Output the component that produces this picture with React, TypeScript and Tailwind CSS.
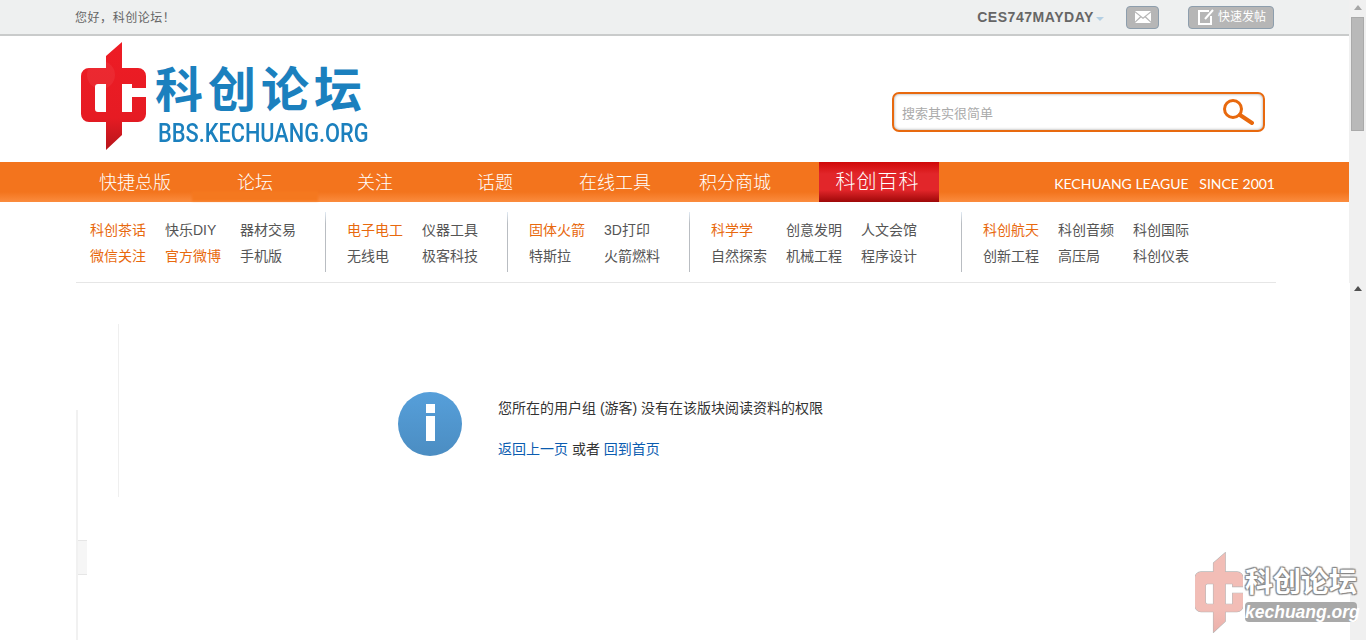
import React from 'react';

const cjk = "font-['Liberation_Sans','Noto_Sans_CJK_SC',sans-serif]";

const navItems = ['快捷总版', '论坛', '关注', '话题', '在线工具', '积分商城'];

const groups = [
  {
    pad: 'pl-[14px] pr-[10px]',
    rows: [
      [['科创茶话', true], ['快乐DIY', false], ['器材交易', false]],
      [['微信关注', true], ['官方微博', true], ['手机版', false]],
    ],
  },
  {
    pad: 'pl-[21px] pr-[10px]',
    rows: [
      [['电子电工', true], ['仪器工具', false]],
      [['无线电', false], ['极客科技', false]],
    ],
  },
  {
    pad: 'pl-[21px] pr-[10px]',
    rows: [
      [['固体火箭', true], ['3D打印', false]],
      [['特斯拉', false], ['火箭燃料', false]],
    ],
  },
  {
    pad: 'pl-[21px] pr-[25px]',
    rows: [
      [['科学学', true], ['创意发明', false], ['人文会馆', false]],
      [['自然探索', false], ['机械工程', false], ['程序设计', false]],
    ],
  },
  {
    pad: 'pl-[21px]',
    rows: [
      [['科创航天', true], ['科创音频', false], ['科创国际', false]],
      [['创新工程', false], ['高压局', false], ['科创仪表', false]],
    ],
  },
] as { pad: string; rows: [string, boolean][][] }[];

const LogoMark = ({ className, id, faded }: { className: string; id: string; faded?: boolean }) => (
  <svg viewBox="0 0 65 110" className={className}>
    <defs>
      <linearGradient id={id} gradientUnits="userSpaceOnUse" x1="0" y1="0" x2="0" y2="110">
        <stop offset="0" stopColor={faded ? '#f2bdb6' : '#ee1c25'} />
        <stop offset="0.7" stopColor={faded ? '#f2bdb6' : '#e61b23'} />
        <stop offset="1" stopColor={faded ? '#ecb0aa' : '#b5151b'} />
      </linearGradient>
    </defs>
    <g
      fill={`url(#${id})`}
      stroke={faded ? '#b5b5b5' : 'none'}
      strokeWidth={faded ? 1.5 : 0}
      paintOrder="stroke"
    >
      <path
        fillRule="evenodd"
        d="M8 27H25V15L41 1V27H57a8 8 0 0 1 8 8V47H51V43H41V71H51V56H65V73a8 8 0 0 1-8 8H41V94L25 109V81H8a8 8 0 0 1-8-8V35a8 8 0 0 1 8-8ZM17 43a3 3 0 0 0-3 3V68a3 3 0 0 0 3 3H25V43Z"
      />
    </g>
    {!faded && <circle cx="20" cy="34" r="14" fill="#fff" opacity="0.06" />}
  </svg>
);

export default function App() {
  return (
    <div className={`relative flex h-[640px] w-[1366px] overflow-hidden bg-white ${cjk}`}>
      <div className="w-[1349px] shrink-0">
        {/* top bar */}
        <div className="h-[36px] border-b-2 border-[#c9cbcb] bg-[#eef0f0]">
          <div className="ml-[75px] flex h-[34px] w-[1200px] items-center">
            <span className="pt-[1px] text-[12px] tracking-[0.55px] text-[#666]">您好，科创论坛！</span>
            <span className="ml-auto pt-[1px] font-['Liberation_Sans',sans-serif] text-[14px] font-bold tracking-[0.55px] text-[#666]">
              CES747MAYDAY
            </span>
            <span className="ml-[2px] mt-[3px] h-0 w-0 border-x-[4px] border-t-[4px] border-x-transparent border-t-[#b3cfe3]" />
            <div className="ml-[22px] flex h-[23px] w-[33px] items-center justify-center rounded-[4px] border border-[#8d9ead] bg-[#b6b6b6]">
              <svg viewBox="0 0 16 12" className="h-[12px] w-[16px]">
                <path d="M0 0H16L8 6.5Z M0 1.5V10.5L5 5.5Z M16 1.5V10.5L11 5.5Z M0 12H16L10 6.5 8 8 6 6.5Z" fill="#fff" />
              </svg>
            </div>
            <div className="ml-[29px] mr-px flex h-[23px] w-[86px] items-center rounded-[4px] border border-[#8d9ead] bg-[#b6b6b6] pl-[9px]">
              <svg viewBox="0 0 16 16" className="h-[16px] w-[16px]" fill="none" stroke="#fff" strokeWidth="2">
                <path d="M11 2H1V15H13V7" />
                <path d="M15 1 7 10" />
              </svg>
              <span className="ml-[4px] text-[12px] text-white">快速发帖</span>
            </div>
          </div>
        </div>

        {/* logo and search */}
        <div className="ml-[75px] flex h-[126px] w-[1200px]">
          <div className="ml-[6px] mt-[5px] flex">
            <LogoMark id="logo-red" className="h-[110px] w-[65px]" />
            <div className="ml-[9px] mt-[19px]">
              <div className="whitespace-nowrap text-[48px] font-bold leading-[52px] tracking-[5px] text-[#1b80be] [font-family:'Noto_Sans_CJK_SC',sans-serif]">
                科创论坛
              </div>
              <div className="ml-[3px] mt-[9px] origin-left scale-x-[0.87] whitespace-nowrap font-['Roboto',sans-serif] text-[25px] font-medium leading-[26px] text-[#1b80be]">
                BBS.KECHUANG.ORG
              </div>
            </div>
          </div>
          <div className="ml-auto mr-[10px] mt-[56px] flex h-[40px] w-[373px] items-center justify-between rounded-[7px] border-2 border-[#e8690e] pl-[8px] pr-[9px] shadow-[inset_0_0_3px_#999]">
            <span className="pt-[3px] text-[13px] text-[#aaa]">搜索其实很简单</span>
            <svg viewBox="0 0 32 26" className="h-[26px] w-[32px]" fill="none" stroke="#e8690e">
              <circle cx="11" cy="10" r="8.5" strokeWidth="3" />
              <path d="M18 16 30 24" strokeWidth="4" strokeLinecap="round" />
            </svg>
          </div>
        </div>

        {/* main nav */}
        <div className="relative h-[40px] bg-[linear-gradient(#f3741d_0%,#f3741d_75%,#fb8c3e_100%)]">
          <div className="absolute left-[192px] top-[29px] h-[10px] w-[126px] bg-[#f4781f] blur-[1px]" />
          <div className="relative ml-[75px] flex h-[40px] w-[1200px] items-center text-white">
            {navItems.map((item) => (
              <a key={item} className="w-[120px] pt-[3px] text-center text-[18px] font-light">
                {item}
              </a>
            ))}
            <a className="ml-[24px] h-[40px] w-[120px] bg-[linear-gradient(#d00808,#e2262a_30%,#e2262a_70%,#9e0808)] pr-[3px] text-center text-[20px] font-light leading-[40px] tracking-[1px]">
              科创百科
            </a>
            <span className="ml-auto whitespace-pre pt-[2px] font-['Lato',sans-serif] text-[14px]">
              KECHUANG LEAGUE   SINCE 2001
            </span>
          </div>
        </div>

        {/* sub nav */}
        <div className="ml-[76px] flex h-[81px] w-[1200px] border-b border-[#e6e6e6] pt-[10px]">
          {groups.map((group, i) => (
            <div
              key={i}
              className={`flex h-[60px] flex-col justify-center pt-[3px] ${group.pad} ${
                i > 0 ? 'border-l [border-image:linear-gradient(#e4eef8,#b9bdc2_20%)_1]' : ''
              }`}
            >
              {group.rows.map((row, j) => (
                <div key={j} className="flex h-[26px] items-center">
                  {row.map(([label, hot]) => (
                    <a
                      key={label}
                      className={`w-[75px] whitespace-nowrap text-[14px] ${hot ? 'text-[#e8690e]' : 'text-[#555]'}`}
                    >
                      {label}
                    </a>
                  ))}
                </div>
              ))}
            </div>
          ))}
        </div>

        {/* message area */}
        <div className="ml-[76px] flex">
          <div className="mt-[127px] h-[240px] w-[11px] border-l-2 border-[#f1f1f1] pt-[130px]">
            <div className="h-[35px] border-y border-[#e6e6e6] bg-[#f6f6f6]" />
          </div>
          <div className="ml-[31px] mt-[41px] h-[173px] w-px bg-[#efefef]" />
          <div className="ml-[279px] mt-[109px] flex">
            <div className="flex h-[64px] w-[64px] flex-col items-center rounded-full bg-[linear-gradient(#569fda,#4b8dc2)] pt-[12px]">
              <div className="h-[9px] w-[9px] bg-white" />
              <div className="mt-[3px] h-[25px] w-[9px] bg-white" />
            </div>
            <div className="ml-[36px] pt-[6px] text-[14px] leading-[20px] text-[#333]">
              <p className="whitespace-nowrap">您所在的用户组 (游客) 没有在该版块阅读资料的权限</p>
              <p className="mt-[21px] whitespace-nowrap">
                <a className="text-[#0b5cb0]">返回上一页</a> 或者 <a className="text-[#0b5cb0]">回到首页</a>
              </p>
            </div>
          </div>
        </div>
      </div>

      {/* browser scrollbar */}
      <div className="flex w-[17px] shrink-0 flex-col">
        <div className="flex h-[283px] flex-col items-center bg-[#f0f0f0]">
          <div className="mt-[5px] h-0 w-0 border-x-[4px] border-b-[5px] border-x-transparent border-b-[#a6a6a6]" />
          <div className="mt-[7px] h-[114px] w-[13px] border border-[#aaa] bg-[#b9b9b9]" />
        </div>
        <div className="ml-px flex flex-1 flex-col items-center bg-[#f0f0f0]">
          <div className="mt-[3px] h-0 w-0 border-x-[4px] border-b-[5px] border-x-transparent border-b-[#505050]" />
        </div>
      </div>

      {/* floating watermark */}
      <div className="absolute left-[1195px] top-[552px] flex">
        <LogoMark id="logo-faded" faded className="h-[81px] w-[48px]" />
        <div className="ml-[2px] mt-[9px]">
          <div className="whitespace-nowrap text-[28px] font-bold leading-[38px] text-white [font-family:'Noto_Sans_CJK_SC',sans-serif] [text-shadow:0_0_2px_#888,1px_1px_1px_#888,-1px_-1px_1px_#888,1px_-1px_1px_#888,-1px_1px_1px_#888]">
            科创论坛
          </div>
          <div className="mt-[3px] w-[112px] whitespace-nowrap rounded-[4px] bg-[#a9a9a9] text-center font-['Liberation_Sans',sans-serif] text-[17.5px] font-bold italic leading-[20px] text-white">
            kechuang.org
          </div>
        </div>
      </div>
    </div>
  );
}
